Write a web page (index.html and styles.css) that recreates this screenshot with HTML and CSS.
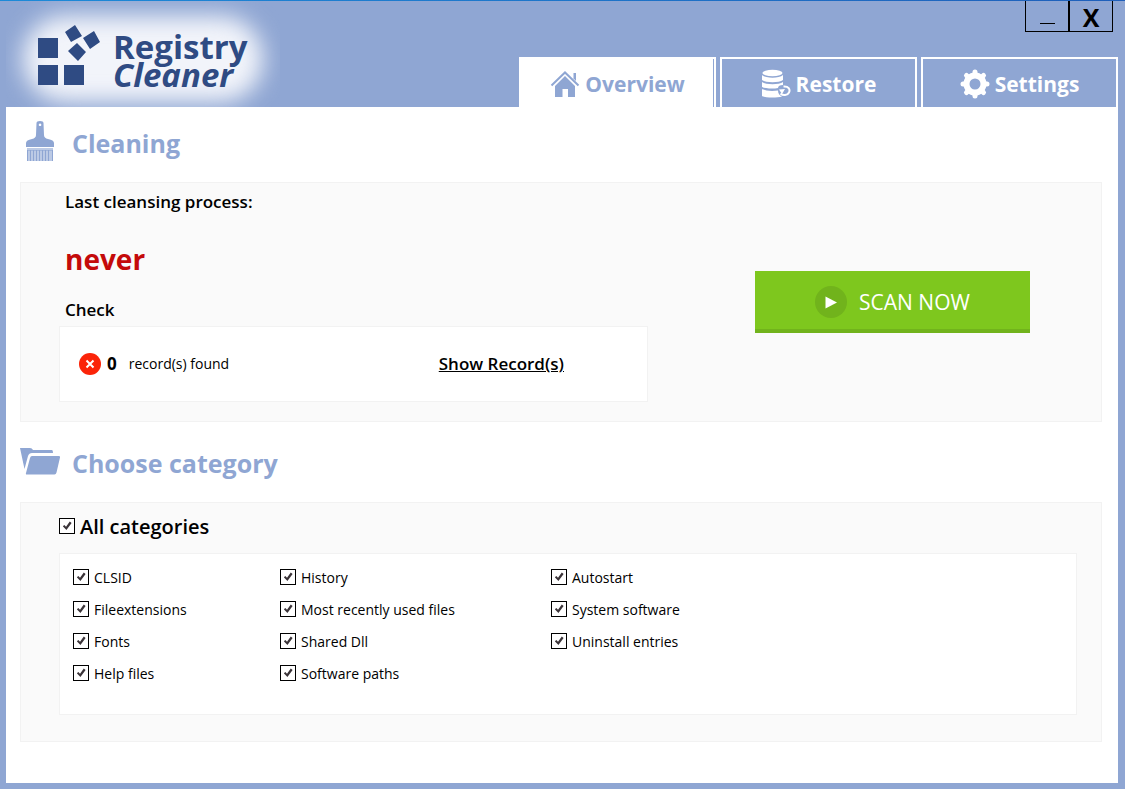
FILE: index.html
```html
<!DOCTYPE html>
<html lang="en">
<head>
<meta charset="utf-8">
<title>Registry Cleaner</title>
<link rel="stylesheet" href="styles.css">
</head>
<body>
<div class="window">
  <header class="header">
    <div class="logo">
      <svg class="logo-mark" viewBox="0 0 64 62" aria-hidden="true">
        <path d="M1 13h20v20H1zM1 40h20v20H1zM27 40h20v20H27zM28 7l10-7 7 11-11 6zM46 13l11-7 6 11-10 7zM31 26l9-8 9 9-8 9z"/>
      </svg>
      <div class="logo-text">
        <span>Registry</span>
        <em>Cleaner</em>
      </div>
    </div>
    <div class="header-side">
      <div class="window-controls">
        <button class="control" type="button" aria-label="Minimize"><span class="minimize-bar"></span></button>
        <button class="control" type="button">X</button>
      </div>
      <nav class="tabs">
        <button class="tab tab-active" type="button">
          <svg class="tab-icon" viewBox="0 0 30 30" aria-hidden="true">
            <path d="M15 7 25 17V28H18V20H12.500V28H5V17z"/>
            <path d="M23.500 4h2.500v8l-2.500-2.500z"/>
            <path class="line" d="M1.500 16.500 15 3.500 28.500 16.500"/>
          </svg>
          Overview
        </button>
        <button class="tab" type="button">
          <svg class="tab-icon" viewBox="0 0 30 30" aria-hidden="true">
            <ellipse cx="11.500" cy="4" rx="10" ry="3.200"/>
            <path d="M1 6c4 3.500 17 3.500 21 0v5c-4 3-17 3-21 0zM1 13c4 3 17 3 21 0v3c-3 0-5 1-5 3-5 1-13 .5-16-1zM1 20c4 2 10 2.500 16 1.500 0 3 1.500 5 4 6-5 1.500-16 1.500-20-.5z"/>
            <path class="line" d="M22.500 17.500c5-.5 7 3 5.500 6-1.500 3-6 3.500-8.500 1"/>
            <path d="M18 20.500l6-.5-3 5z"/>
          </svg>
          Restore
        </button>
        <button class="tab" type="button">
          <svg class="tab-icon" viewBox="0 0 30 30" aria-hidden="true">
            <circle class="gear-ring" cx="15" cy="15" r="8.500"/>
            <path class="gear-teeth" d="M15 3v1M15 26v1M3 15h1M26 15h1M6.500 6.500l1 1M22.500 22.500l1 1M6.500 23.500l1-1M22.500 7.500l1-1"/>
          </svg>
          Settings
        </button>
      </nav>
    </div>
  </header>

  <main class="content">
    <section class="section">
      <h2 class="section-title">
        <svg class="section-icon" viewBox="0 0 40 42" aria-hidden="true">
          <path fill-rule="evenodd" d="M16.500 3q0-2 3.500-2t3.500 2l.5 12q0 3 4 4 6 1 6 4v4H6v-4q0-3 6-4 4-1 4-4zM20 3.500a1.300 1.300 0 1 0 .1 0z"/>
          <path class="bristle-base" d="M7 28h26v3H7z"/>
          <path class="bristles" d="M7.500 30v11M10.500 30v11M13.500 30v11M16.500 30v11M19.500 30v11M22.500 30v11M25.500 30v11M28.500 30v11M32.500 30v11"/>
          <path class="bristle-fill" d="M7 30h26v11H7z"/>
        </svg>
        Cleaning
      </h2>
      <div class="panel status-panel">
        <div class="status">
          <h3 class="label">Last cleansing process:</h3>
          <p class="last-run">never</p>
          <h3 class="label">Check</h3>
          <div class="card records">
            <svg class="error-icon" viewBox="0 0 22 22" aria-hidden="true">
              <circle cx="11" cy="11" r="11"/>
              <path d="m7.500 7.500 7 7m0-7-7 7"/>
            </svg>
            <strong class="count">0</strong>
            <span class="found">record(s) found</span>
            <a class="show-link" href="#">Show Record(s)</a>
          </div>
        </div>
        <button class="scan" type="button">
          <svg class="scan-icon" viewBox="0 0 32 32" aria-hidden="true">
            <circle cx="16" cy="16" r="16"/>
            <path d="M10.500 10.500 22 16.500 10.500 22.500z"/>
          </svg>
          SCAN NOW
        </button>
      </div>
    </section>

    <section class="section">
      <h2 class="section-title">
        <svg class="section-icon" viewBox="0 0 40 42" aria-hidden="true">
          <path d="M0 8h10q2 0 3 2h19q1 0 1 3H12q-3 0-4 3L4.500 29z"/>
          <path d="M12 16h27q1.500 0 1 1.500L36.500 32.500q-.5 2-2 2H7q-1.500 0-1-1.500l4-15q.5-2 2-2z"/>
        </svg>
        Choose category
      </h2>
      <div class="panel category-panel">
        <label class="check check-all"><input type="checkbox" checked>All categories</label>
        <div class="card categories">
          <div class="column">
            <label class="check"><input type="checkbox" checked>CLSID</label>
            <label class="check"><input type="checkbox" checked>Fileextensions</label>
            <label class="check"><input type="checkbox" checked>Fonts</label>
            <label class="check"><input type="checkbox" checked>Help files</label>
          </div>
          <div class="column">
            <label class="check"><input type="checkbox" checked>History</label>
            <label class="check"><input type="checkbox" checked>Most recently used files</label>
            <label class="check"><input type="checkbox" checked>Shared Dll</label>
            <label class="check"><input type="checkbox" checked>Software paths</label>
          </div>
          <div class="column">
            <label class="check"><input type="checkbox" checked>Autostart</label>
            <label class="check"><input type="checkbox" checked>System software</label>
            <label class="check"><input type="checkbox" checked>Uninstall entries</label>
          </div>
        </div>
      </div>
    </section>
  </main>
</div>
</body>
</html>
```
FILE: styles.css
```css
* {
  box-sizing: border-box;
}

body {
  margin: 0;
  color: #000;
  font: 14px/20px "Open Sans", "Noto Sans", sans-serif;
}

button {
  font-family: inherit;
}

h2,
h3,
p {
  margin: 0;
}

.window {
  display: flex;
  flex-direction: column;
  min-height: 100vh;
  padding: 0 7px 6px 6px;
  background: linear-gradient(90deg, #1c8ad8, #1f5fba) top / 100% 1px no-repeat #8fa6d3;
}

.header {
  display: flex;
  justify-content: space-between;
}

.logo {
  position: relative;
  display: flex;
  align-items: flex-start;
  gap: 12px;
  width: 274px;
  height: 106px;
  margin-top: 1px;
  padding: 24px 0 0 31px;
  overflow: hidden;
}

/* Soft glow behind the mark and the name */
.logo::before {
  content: "";
  position: absolute;
  inset: 22px 24px 12px;
  border-radius: 40px;
  background: #f2f4fa;
  filter: blur(10px);
  box-shadow: 0 0 12px 8px #e6ebf5;
}

.logo-mark {
  position: relative;
  flex: none;
  width: 64px;
  height: 62px;
  fill: #2f4b83;
}

.logo-text {
  position: relative;
  display: flex;
  flex-direction: column;
  padding-top: 8px;
  color: #2f4b83;
  font-size: 33px;
  font-weight: 700;
  line-height: 28px;
}

.header-side {
  display: flex;
  flex-direction: column;
  justify-content: space-between;
}

.window-controls {
  display: flex;
  align-self: flex-end;
  padding: 1px 5px 0 0;
}

.control {
  display: flex;
  align-items: center;
  justify-content: center;
  width: 44px;
  height: 31px;
  padding: 2px 0 0;
  border: solid #000;
  border-width: 0 1px 1px;
  background: none;
  color: #000;
  font-size: 25px;
  font-weight: 700;
}

.minimize-bar {
  width: 15px;
  height: 1px;
  margin-top: 12px;
  background: #000;
}

.tabs {
  display: flex;
  gap: 4px;
}

.tab {
  display: flex;
  align-items: center;
  justify-content: center;
  gap: 5px;
  width: 197px;
  height: 50px;
  padding: 2px 0 0;
  border: 2px solid #fff;
  border-bottom: 0;
  background: #8fa6d3;
  color: #fff;
  font-size: 21px;
  font-weight: 700;
}

.tab-active {
  background: #fff;
  box-shadow: inset -1px 0 #8fa6d3;
  color: #8fa6d3;
}

.tab-icon {
  width: 30px;
  height: 30px;
  fill: currentColor;
}

.tab-icon .line {
  fill: none;
  stroke: currentColor;
  stroke-width: 2;
}

.tab-icon .gear-ring {
  fill: none;
  stroke: currentColor;
  stroke-width: 6;
}

.tab-icon .gear-teeth {
  stroke: currentColor;
  stroke-linecap: round;
  stroke-width: 5;
}

.content {
  flex: 1;
  padding: 9px 16px 41px 14px;
  background: #fff;
}

.section + .section {
  margin-top: 14px;
}

.section-title {
  display: flex;
  align-items: center;
  gap: 12px;
  height: 54px;
  margin-bottom: 12px;
  color: #8fa6d3;
  font-size: 25px;
  font-weight: 700;
}

.section-icon {
  width: 40px;
  height: 42px;
  margin-bottom: 4px;
  fill: currentColor;
}

.bristles {
  stroke: currentColor;
  stroke-width: 1;
}

.bristle-base,
.bristle-fill {
  opacity: 0.6;
}

.panel {
  border: 1px solid #f2f2f2;
  background: #fafafa;
}

.status-panel {
  display: flex;
  align-items: center;
  justify-content: space-between;
  height: 240px;
  padding: 0 71px 0 38px;
}

.status {
  width: 589px;
  padding-bottom: 12px;
}

.label {
  padding-left: 6px;
  font-size: 17px;
  font-weight: 600;
  line-height: 24px;
}

.last-run {
  padding: 31px 0 25px 6px;
  color: #c40a0a;
  font-size: 28px;
  font-weight: 700;
  line-height: 28px;
}

.card {
  border: 1px solid #f2f2f2;
  background: #fff;
}

.records {
  display: flex;
  align-items: center;
  height: 76px;
  margin-top: 4px;
  padding-left: 19px;
}

.error-icon {
  width: 22px;
  height: 22px;
  fill: #fb2409;
}

.error-icon path {
  stroke: #fff;
  stroke-width: 2;
}

.count {
  margin-left: 6px;
  font-size: 17px;
}

.found {
  margin-left: 12px;
}

.show-link {
  margin: 0 83px 0 auto;
  color: #000;
  font-size: 17px;
  font-weight: 600;
}

.scan {
  display: flex;
  align-items: center;
  justify-content: center;
  gap: 12px;
  width: 275px;
  height: 62px;
  padding-top: 4px;
  border: 0;
  border-bottom: 4px solid #71b31c;
  background: #7ec71e;
  color: #fff;
  font-size: 21px;
}

.scan-icon {
  width: 32px;
  height: 32px;
  fill: #71b31c;
}

.scan-icon path {
  fill: #fff;
}

.category-panel {
  height: 240px;
  padding: 14px 24px 0 38px;
}

.check {
  display: flex;
  align-items: center;
  gap: 5px;
  height: 20px;
}

.check-all {
  font-size: 20px;
  font-weight: 600;
}

.check input {
  appearance: none;
  width: 16px;
  height: 16px;
  margin: 0 0 2px;
  border: 1px solid #000;
  background: #fff;
}

.check input:checked::before {
  content: "";
  display: block;
  width: 14px;
  height: 14px;
  background: #3a3338;
  clip-path: polygon(20% 52%, 31% 42%, 43% 55%, 70% 18%, 83% 28%, 46% 78%);
}

.categories {
  display: grid;
  grid-template-columns: 207px 271px 1fr;
  height: 162px;
  margin-top: 16px;
  padding: 14px 13px;
}

.column {
  display: flex;
  flex-direction: column;
  gap: 12px;
}
```
